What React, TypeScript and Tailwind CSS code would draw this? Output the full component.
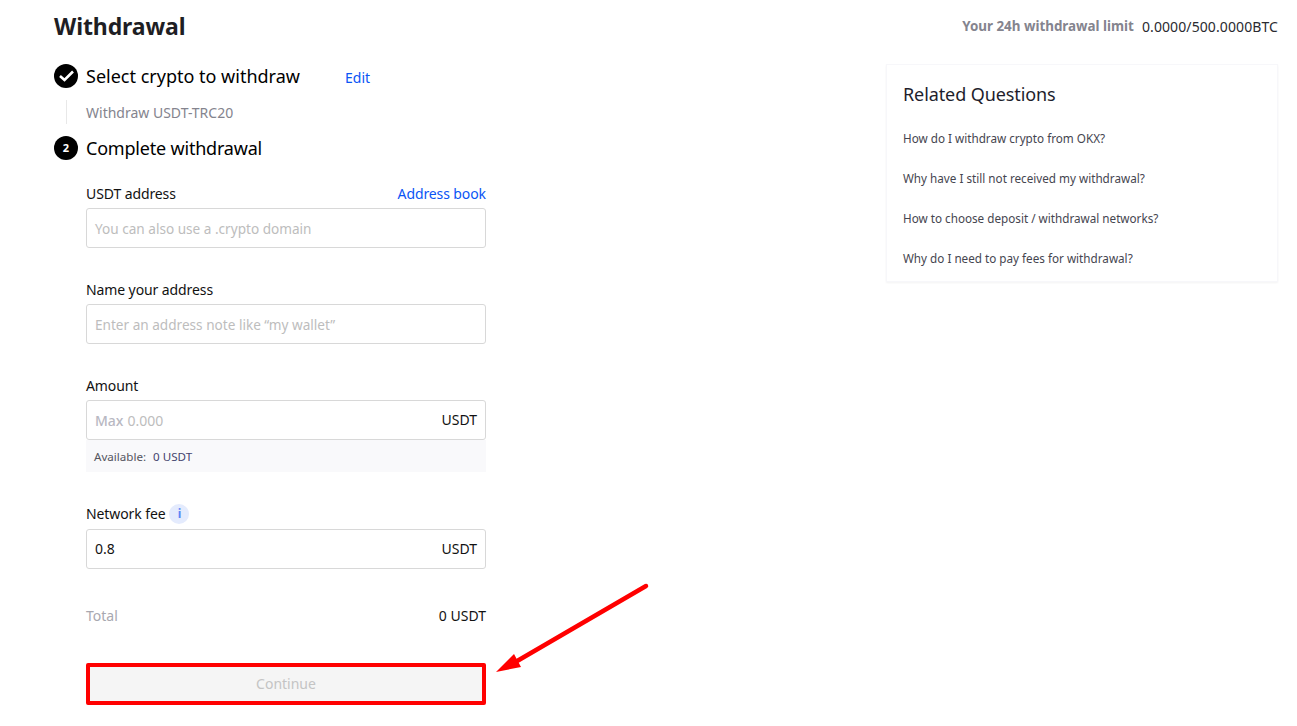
import React from "react";

function Field({ label, right, placeholder, value, suffix, prefix, gap = "mt-[4px]" }: { label: React.ReactNode; right?: string; placeholder?: string; value?: string; suffix?: string; prefix?: string; gap?: string }) {
  return (
    <div>
      <div className="flex h-[20px] -translate-y-[1px] items-center justify-between text-[14px] tracking-[-0.1px] text-[#121212]">
        <div className="flex items-center">{label}</div>
        {right && <span className="text-[#0a55f5]">{right}</span>}
      </div>
      <div className={`${gap} flex h-[40px] items-center justify-between rounded-[3px] border border-[#d8d8d8] bg-white pl-[8px] pr-[8px] text-[14px]`}>
        <span className="flex items-center gap-[4px]">
          {prefix && <span className="font-medium text-[#b8b8c2]">{prefix}</span>}
          {placeholder && <span className={prefix ? "text-[#bdbdbd]" : "translate-y-[1px] text-[13.6px] text-[#bdbdbd]"}>{placeholder}</span>}
          {value && <span className="-translate-y-[1px] text-[#121212]">{value}</span>}
        </span>
        {suffix && <span className="-translate-y-[1px] text-[#121212]">{suffix}</span>}
      </div>
    </div>
  );
}

export default function App() {
  const qs = [
    "How do I withdraw crypto from OKX?",
    "Why have I still not received my withdrawal?",
    "How to choose deposit / withdrawal networks?",
    "Why do I need to pay fees for withdrawal?",
  ];
  return (
    <div className="relative h-[726px] w-[1297px] overflow-hidden bg-white pl-[54px] pr-[19px] font-['Noto_Sans','Open_Sans',sans-serif]">
      <div className="flex h-[52px] items-center justify-between">
        <h1 className="text-[23px] font-bold tracking-[-0.1px] text-[#1e1e24]">Withdrawal</h1>
        <div className="flex gap-[8px] text-[14px]">
          <span className="text-[13.4px] font-bold text-[#84848e]">Your 24h withdrawal limit</span>
          <span className="tracking-[0.1px] text-[#2a2a30]">0.0000/500.0000BTC</span>
        </div>
      </div>
      <div className="mt-[12px] flex justify-between">
        <div className="w-[432px]">
          <div className="flex h-[24px] items-center">
            <span className="flex h-[24px] w-[24px] items-center justify-center rounded-full bg-black">
              <svg width="16" height="16" viewBox="0 0 16 16" fill="none">
                <path d="M2 8 L6.5 12 L15 3.5" stroke="white" strokeWidth="2.6" />
              </svg>
            </span>
            <span className="ml-[8px] w-[259px] text-[18px] text-[#000]">Select crypto to withdraw</span>
            <span className="translate-y-[1px] text-[14px] text-[#0a55f5]">Edit</span>
          </div>
          <div className="ml-[12px] mt-[12px] flex h-[24px] items-center border-l border-[#e8e8e8] pl-[19px] text-[14px] text-[#84848e]">
            Withdraw USDT-TRC20
          </div>
          <div className="mt-[12px] flex h-[24px] items-center">
            <span className="flex h-[24px] w-[24px] items-center justify-center rounded-full bg-black text-[11px] font-bold text-white">2</span>
            <span className="ml-[8px] text-[18px] tracking-[-0.2px] text-[#000]">Complete withdrawal</span>
          </div>
          <div className="ml-[32px] mt-[24px] w-[400px]">
            <Field label="USDT address" right="Address book" placeholder="You can also use a .crypto domain" />
            <div className="mt-[32px]">
              <Field label="Name your address" placeholder="Enter an address note like “my wallet”" />
            </div>
            <div className="mt-[32px]">
              <Field label="Amount" prefix="Max" placeholder="0.000" suffix="USDT" />
              <div className="flex h-[32px] items-center gap-[7px] bg-[#f9f9fb] pl-[8px] pt-[2px] text-[11.6px]">
                <span className="text-[#55555e]">Available:</span>
                <span className="text-[#44446e]">0 USDT</span>
              </div>
            </div>
            <div className="mt-[32px]">
              <Field
                gap="mt-[5px]"
                label={
                  <>
                    Network fee
                    <span className="ml-[4px] flex h-[20px] w-[20px] translate-y-[1px] items-center justify-center rounded-full bg-[#e4ebfd] text-[12px] font-bold text-[#5c86f5]">i</span>
                  </>
                }
                value="0.8"
                suffix="USDT"
              />
            </div>
            <div className="mt-[36px] flex h-[20px] items-center justify-between text-[14px]">
              <span className="text-[#a8a8b0]">Total</span>
              <span className="text-[#121212]">0 USDT</span>
            </div>
            <button className="mt-[38px] flex h-[42px] w-[400px] items-center justify-center rounded-[2px] border-[4px] border-[#ff0000] bg-[#f5f5f5] text-[14px] text-[#c4c4c4]">
              <span className="-translate-y-[1px]">Continue</span>
            </button>
          </div>
        </div>
        <div className="h-[218px] w-[392px] border border-[#f7f7fa] px-[16px] pt-[16px] shadow-[0_1px_2px_rgba(0,0,0,0.05)]">
          <div className="flex h-[26px] items-center text-[18px] tracking-[-0.1px] text-[#1e1e2c]">Related Questions</div>
          <div className="mt-[12px] flex flex-col">
            {qs.map((q) => (
              <div key={q} className="flex h-[40px] items-center text-[11.7px] text-[#45454f]">{q}</div>
            ))}
          </div>
        </div>
      </div>
      <svg className="absolute left-[490px] top-[578px]" width="165" height="100" viewBox="490 578 165 100" fill="none">
        <path d="M646 586 L512 664" stroke="#ff0000" strokeWidth="4.5" strokeLinecap="round" />
        <path d="M496 672 L514 654 L521 667 Z" fill="#ff0000" />
      </svg>
    </div>
  );
}
